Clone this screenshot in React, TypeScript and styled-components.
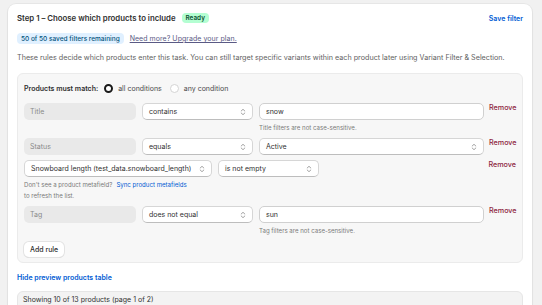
import styled, { createGlobalStyle } from "styled-components";

const GlobalStyle = createGlobalStyle`
  html, body {
    margin: 0;
    background: #f1f1f1;
    font-family: Inter, "Noto Sans", sans-serif;
    color: #303030;
  }
`;

const Page = styled.div`
  padding: 4px 10px 0 8px;
  height: 305px;
  overflow: hidden;
`;

const Card = styled.div`
  background: #fff;
  border-radius: 8px;
  padding: 9px 9px 0;
  box-shadow: 0 0 0 1px rgba(0, 0, 0, 0.04), 0 1px 2px rgba(0, 0, 0, 0.08);
  min-height: 320px;
`;

const HeaderRow = styled.div`
  display: flex;
  align-items: center;
  justify-content: space-between;
  height: 10px;
`;

const TitleWrap = styled.div`
  display: flex;
  align-items: center;
  gap: 6px;
`;

const Title = styled.h2`
  margin: 0;
  font-size: 7.8px;
  font-weight: 600;
  color: #303030;
`;

const Badge = styled.span<{ $tone: "success" | "info" }>`
  display: inline-flex;
  align-items: center;
  border-radius: 4px;
  font-weight: ${(p) => (p.$tone === "success" ? 600 : 500)};
  font-size: ${(p) => (p.$tone === "success" ? "6.4px" : "6.5px")};
  padding: 0 ${(p) => (p.$tone === "success" ? "4px" : "4px")};
  height: ${(p) => (p.$tone === "success" ? "10px" : "11px")};
  background: ${(p) => (p.$tone === "success" ? "#b4fed2" : "#e0f0ff")};
  color: ${(p) => (p.$tone === "success" ? "#0c5132" : "#00527c")};
`;

const LinkButton = styled.a`
  color: #005bd3;
  font-size: 7px;
  font-weight: 600;
  text-decoration: none;
  cursor: pointer;
`;

const PlanRow = styled.div`
  display: flex;
  align-items: center;
  gap: 6px;
  margin-top: 10px;
`;

const UpgradeLink = styled.a`
  color: #5a5a85;
  font-size: 7px;
  letter-spacing: 0.05px;
  text-decoration: underline;
`;

const Description = styled.p`
  margin: 9px 0 0;
  font-size: 7.2px;
  line-height: 10px;
  color: #616161;
  white-space: nowrap;
`;

const Panel = styled.div`
  margin-top: 10px;
  background: #f7f7f7;
  border: 1px solid #ebebeb;
  border-radius: 6px;
  padding: 8px 6px 5px;
`;

const MatchRow = styled.div`
  display: flex;
  align-items: center;
  height: 12px;
  font-size: 7px;
  color: #303030;
`;

const MatchLabel = styled.span`
  font-weight: 600;
  margin-right: 6px;
`;

const RadioLabel = styled.label`
  display: inline-flex;
  align-items: center;
  gap: 5px;
  margin-right: 8px;
  color: #4a4a4a;
`;

const RadioDot = styled.span<{ $on?: boolean }>`
  box-sizing: border-box;
  width: 9px;
  height: 9px;
  border-radius: 50%;
  background: #fff;
  border: ${(p) => (p.$on ? "2.6px solid #1a1a1a" : "1px solid #d4d4d4")};
`;

const Rules = styled.div`
  display: flex;
  flex-direction: column;
  gap: 5px;
  margin-top: 9px;
`;

const RuleRow = styled.div`
  display: flex;
  align-items: flex-start;
  gap: 5px;
`;

const Controls = styled.div`
  width: 460px;
  display: flex;
  flex-direction: column;
`;

const Fields = styled.div`
  display: flex;
  gap: 6px;
`;

const FieldBase = styled.div<{ $w: number }>`
  box-sizing: border-box;
  width: ${(p) => p.$w}px;
  height: 17px;
  border-radius: 5px;
  display: flex;
  align-items: center;
  justify-content: space-between;
  padding: 0 6px;
  font-size: 7px;
  color: #303030;
  white-space: nowrap;
`;

const Disabled = styled(FieldBase)`
  background: #e9e9e9;
  color: #8a8a8a;
`;

const Select = styled(FieldBase)`
  background: #fff;
  border: 1px solid #d6d6d6;
  border-bottom-color: #bdbdbd;
`;

const Input = styled(Select)`
  border-color: #d0d0d0;
`;

const Help = styled.div<{ $indent?: number }>`
  margin-top: 2px;
  padding-left: ${(p) => p.$indent ?? 0}px;
  font-size: 6.1px;
  line-height: 11px;
  color: #7a7a7a;
`;

const HelpLink = styled.a`
  color: #005bd3;
  margin-left: 4px;
`;

const Remove = styled.a`
  color: #8e1f3f;
  font-size: 7.2px;
  font-weight: 500;
  line-height: 10px;
`;

const AddRule = styled.button`
  margin-top: 6px;
  height: 15px;
  padding: 0 6px;
  border: none;
  border-radius: 5px;
  background: #fff;
  box-shadow: 0 0 0 1px #e3e3e3, 0 1px 0 #c9c9c9;
  font-family: inherit;
  font-size: 7px;
  font-weight: 500;
  color: #303030;
`;

const PreviewToggle = styled.div`
  margin-top: 9px;
  height: 10px;
  display: flex;
  align-items: center;
`;

const TableHead = styled.div`
  margin-top: 9px;
  background: #f3f3f3;
  border: 1px solid #e6e6e6;
  border-radius: 6px 6px 0 0;
  padding: 3px 5px;
  font-size: 7px;
  line-height: 10px;
  color: #303030;
  height: 30px;
`;

const Chevron = () => (
  <svg width="6" height="8" viewBox="0 0 6 8" fill="none">
    <path d="M1.2 3 3 1.3 4.8 3M1.2 5 3 6.7 4.8 5" stroke="#8a8a8a" strokeWidth="0.8" strokeLinecap="round" strokeLinejoin="round" />
  </svg>
);

type Rule = {
  field: string;
  op: string;
  value: string;
  valueSelect?: boolean;
  help?: string;
};

const rules: Rule[] = [
  { field: "Title", op: "contains", value: "snow", help: "Title filters are not case-sensitive." },
  { field: "Status", op: "equals", value: "Active", valueSelect: true },
];

function StandardRule({ rule }: { rule: Rule }) {
  return (
    <RuleRow>
      <Controls>
        <Fields>
          <Disabled $w={112}>{rule.field}</Disabled>
          <Select $w={111}>
            {rule.op}
            <Chevron />
          </Select>
          {rule.valueSelect ? (
            <Select $w={225}>
              {rule.value}
              <Chevron />
            </Select>
          ) : (
            <Input $w={225}>{rule.value}</Input>
          )}
        </Fields>
        {rule.help && <Help $indent={235}>{rule.help}</Help>}
      </Controls>
      <Remove>Remove</Remove>
    </RuleRow>
  );
}

export default function App() {
  return (
    <Page>
      <GlobalStyle />
      <Card>
        <HeaderRow>
          <TitleWrap>
            <Title>Step 1 – Choose which products to include</Title>
            <Badge $tone="success">Ready</Badge>
          </TitleWrap>
          <LinkButton>Save filter</LinkButton>
        </HeaderRow>
        <PlanRow>
          <Badge $tone="info">50 of 50 saved filters remaining</Badge>
          <UpgradeLink>Need more? Upgrade your plan.</UpgradeLink>
        </PlanRow>
        <Description>
          These rules decide which products enter this task. You can still target specific variants within each product
          later using Variant Filter &amp; Selection.
        </Description>
        <Panel>
          <MatchRow>
            <MatchLabel>Products must match:</MatchLabel>
            <RadioLabel>
              <RadioDot $on />
              all conditions
            </RadioLabel>
            <RadioLabel>
              <RadioDot />
              any condition
            </RadioLabel>
          </MatchRow>
          <Rules>
            {rules.map((r) => (
              <StandardRule key={r.field} rule={r} />
            ))}
            <RuleRow>
              <Controls>
                <Fields>
                  <Select $w={188}>
                    Snowboard length (test_data.snowboard_length)
                    <Chevron />
                  </Select>
                  <Select $w={101}>
                    is not empty
                    <Chevron />
                  </Select>
                </Fields>
                <Help>
                  Don't see a product metafield?<HelpLink>Sync product metafields</HelpLink>
                  <br />
                  to refresh the list.
                </Help>
              </Controls>
              <Remove>Remove</Remove>
            </RuleRow>
            <StandardRule
              rule={{ field: "Tag", op: "does not equal", value: "sun", help: "Tag filters are not case-sensitive." }}
            />
          </Rules>
          <AddRule>Add rule</AddRule>
        </Panel>
        <PreviewToggle>
          <LinkButton>Hide preview products table</LinkButton>
        </PreviewToggle>
        <TableHead>Showing 10 of 13 products (page 1 of 2)</TableHead>
      </Card>
    </Page>
  );
}
